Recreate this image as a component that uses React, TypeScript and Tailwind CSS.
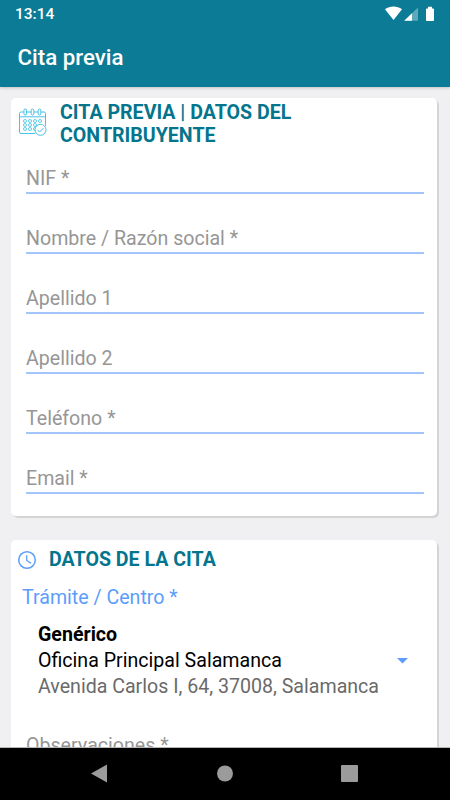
const fields = ["NIF *", "Nombre / Razón social *", "Apellido 1", "Apellido 2", "Teléfono *", "Email *"];

function CalendarIcon() {
  return (
    <svg width="28" height="29" viewBox="0 0 28 29" fill="none" stroke="#35bbe4" strokeWidth="0.9">
      <path d="M16 25.500H2a1.500 1.500 0 0 1-1.500-1.500V5.500A1.500 1.500 0 0 1 2 4h2.500M7.500 4h4.500M15 4h4M22 4h3a1.500 1.500 0 0 1 1.500 1.500V18M.5 8.800h26" />
      {[6.2, 13.5, 20.5].map((x) => (
        <rect key={x} x={x - 1.3} y="1" width="2.6" height="6" rx="1.3" />
      ))}
      {[13, 17, 21].map((y) =>
        [6, 11, 16, 21].map((x) =>
          x === 21 && y > 14 ? null : <rect key={`${x}-${y}`} x={x - 1.4} y={y - 1.3} width="2.8" height="2.6" rx="0.8" />
        )
      )}
      <circle cx="21.500" cy="21.800" r="5.500" fill="#fff" />
      <path d="m18.500 21.800 2.200 2.200 4-4.200" />
    </svg>
  );
}

function ClockIcon() {
  return (
    <svg width="20" height="20" viewBox="0 0 20 20" fill="none" stroke="#5c9dfb" strokeWidth="1.5">
      <circle cx="10" cy="10" r="8.300" />
      <path d="M9.700 5.200v5.300l4.200 2.600" strokeWidth="1.3" />
    </svg>
  );
}

function StatusBar() {
  return (
    <div className="flex h-[28px] items-center justify-between pl-[15px] pr-[15px] text-[15.500px] font-medium">
      <span className="mt-px">13:14</span>
      <svg width="50" height="16" viewBox="0 0 50 16" className="mt-[-1px]" fill="#fff">
        <path d="M0 3.200C5-.4 12-.4 17 3.200L8.500 14z" />
        <path d="M33 1.500v13.300H19.200z" opacity=".35" />
        <path d="M27 7.300v7.500h-7.800z" />
        <path d="M43 .8h4v1.700h1.200q.8 0 .8.800v10.700q0 .9-.9.900h-6.200q-.9 0-.9-.9V3.300q0-.8.8-.8H43z" />
      </svg>
    </div>
  );
}

export default function App() {
  return (
    <div className="flex h-[800px] w-[450px] flex-col overflow-hidden bg-[#f0f0f2] font-[Roboto,sans-serif] text-[19.600px]">
      <header className="z-10 h-[87px] shrink-0 bg-[#0c7b95] text-white shadow-[0_1px_3px_rgba(0,0,0,0.2)]">
        <StatusBar />
        <h1 className="mt-[16px] pl-[17.5px] text-[22.300px] leading-[26px] font-medium">Cita previa</h1>
      </header>

      <main className="flex min-h-0 flex-1 flex-col gap-6 overflow-hidden pt-[11px] pr-[13px] pl-[11px]">
        <section className="h-[418px] shrink-0 rounded-[5px] bg-white shadow-[2px_2px_0_#d4d4d4]">
          <div className="flex h-[52px] gap-[13px] pt-[3px] pl-2">
            <div className="pt-[7px]">
              <CalendarIcon />
            </div>
            <h2 className="leading-[23px] font-bold text-[#04758d]">
              CITA PREVIA | DATOS DEL
              <br />
              CONTRIBUYENTE
            </h2>
          </div>
          <div className="mr-[13px] ml-[15px]">
            {fields.map((label) => (
              <div key={label} className="flex h-[44px] flex-col justify-end border-b-2 border-[#a4c5fa] pb-[2px] leading-[23px] text-[#969696] not-first:mt-4">
                {label}
              </div>
            ))}
          </div>
        </section>

        <section className="h-[300px] shrink-0 rounded-[5px] bg-white shadow-[2px_2px_0_#d4d4d4]">
          <div className="flex items-center gap-3 pt-[8px] pl-[6px]">
            <ClockIcon />
            <h2 className="leading-[23px] font-bold text-[#04758d]">DATOS DE LA CITA</h2>
          </div>
          <div className="mt-[15px] pl-[11px] leading-[23px] text-[#5c9dfb]">Trámite / Centro *</div>
          <div className="mt-[13px] flex items-center justify-between pr-[29px] pl-[27px] leading-[26px]">
            <div>
              <div className="font-bold text-black">Genérico</div>
              <div className="text-black">Oficina Principal Salamanca</div>
              <div className="text-[#6a6a6a]">Avenida Carlos I, 64, 37008, Salamanca</div>
            </div>
            <svg width="11" height="6" viewBox="0 0 11 6">
              <path d="M0 0h11L5.500 5.500z" fill="#5c9dfb" />
            </svg>
          </div>
          <div className="mt-[34px] pl-[15px] leading-[23px] text-[#969696]">Observaciones *</div>
        </section>
      </main>

      <nav className="h-[53px] shrink-0 border-t border-[#b5b5b5] bg-black">
        <svg width="450" height="52" viewBox="0 0 450 52" fill="#9b9b9b">
          <path d="M107 16.500v18L91 25.500z" />
          <circle cx="225" cy="25.500" r="8" />
          <rect x="341" y="17" width="17" height="17" rx="1" />
        </svg>
      </nav>
    </div>
  );
}
